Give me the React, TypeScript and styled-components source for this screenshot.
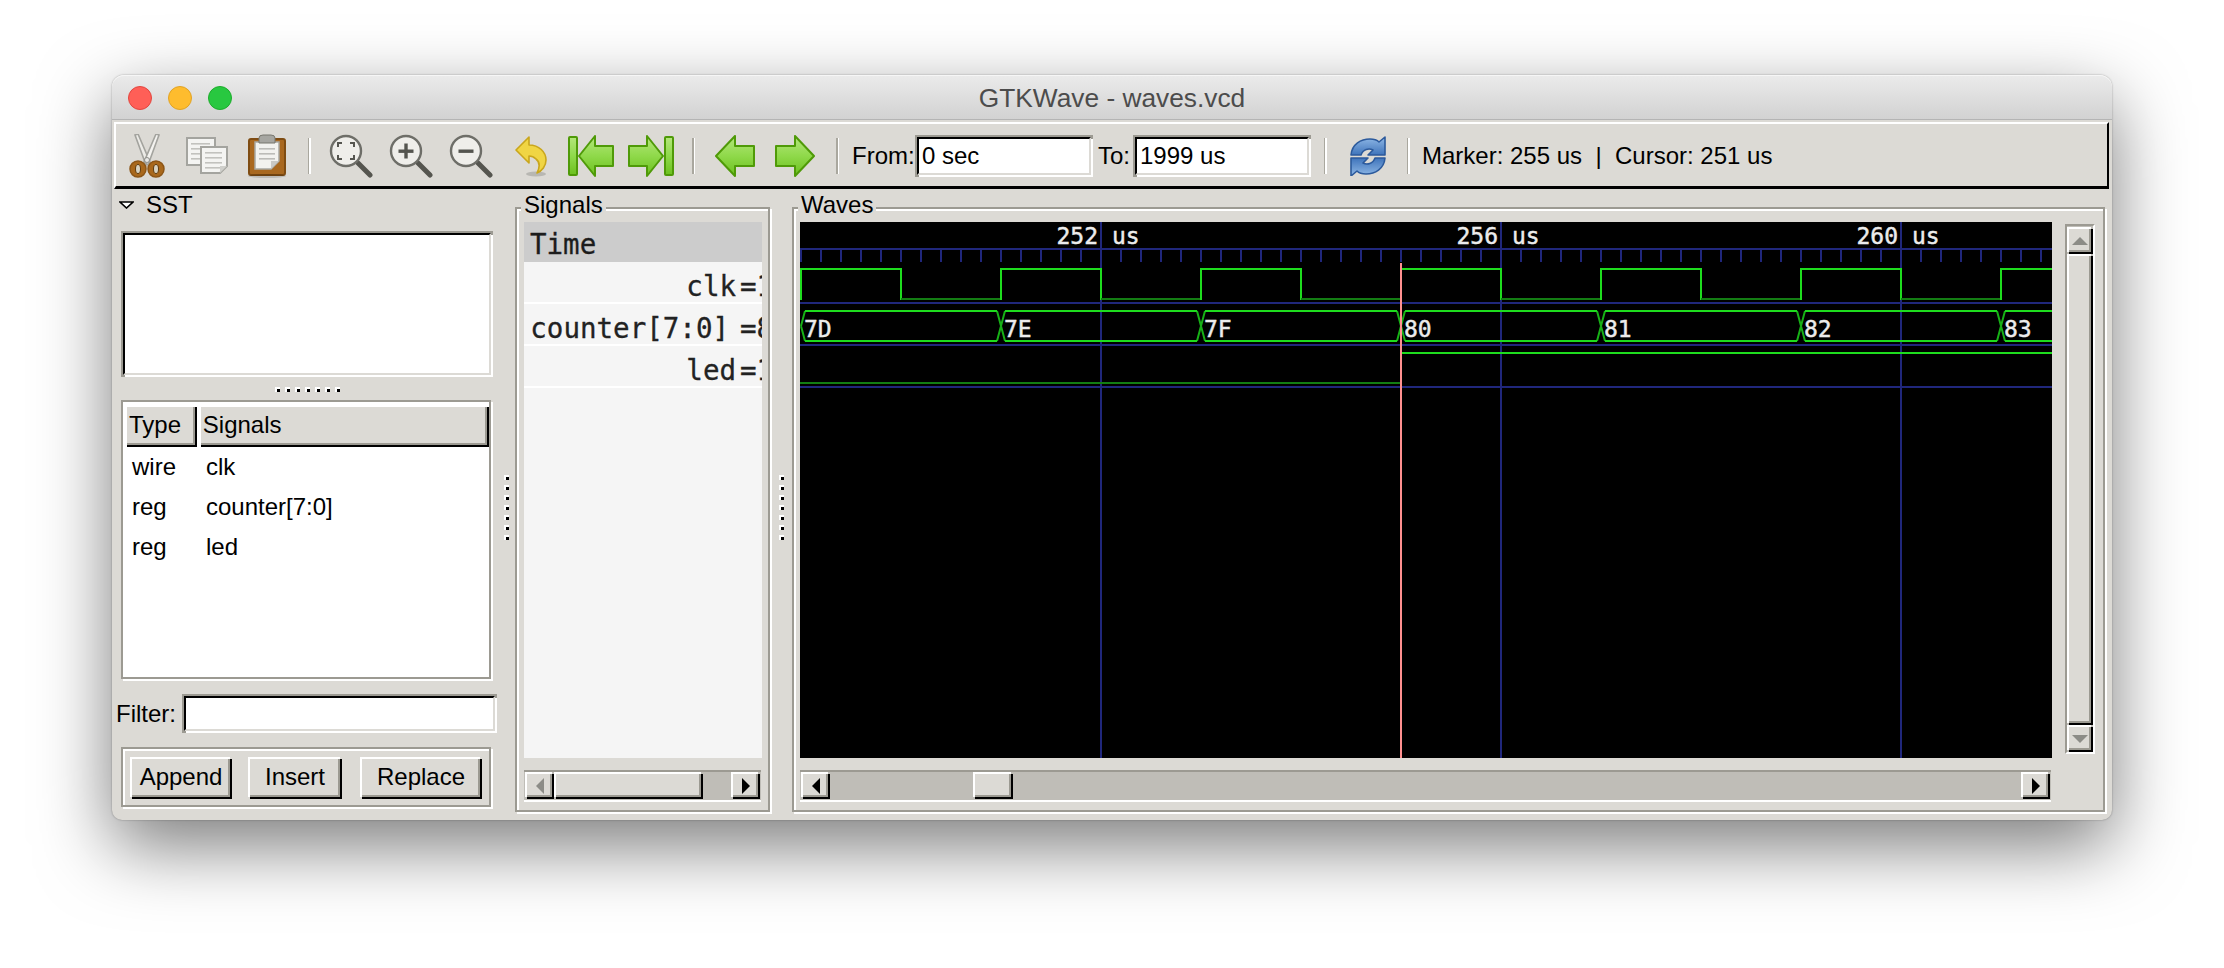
import styled, { createGlobalStyle, css } from "styled-components";

const GlobalStyle = createGlobalStyle`
  html, body {
    margin: 0;
    height: 100%;
    background: #fff;
    overflow: hidden;
  }
  * {
    box-sizing: border-box;
  }
`;

const BG = "#dcdad5";
const DARK = "#9c9a92";

const raised = css`
  border-top: 2px solid #fff;
  border-left: 2px solid #fff;
  box-shadow: inset -2px -2px 0 ${DARK}, 2px 2px 0 #000;
  background: ${BG};
`;

const sunken = css`
  border-style: solid;
  border-width: 2px;
  border-color: #000 ${BG} ${BG} #000;
  box-shadow: -2px -2px 0 ${DARK}, 2px 2px 0 #fff, 2px -2px 0 ${DARK}, -2px 2px 0 ${DARK};
  background: #fff;
`;

const etched = css`
  border: 2px solid ${DARK};
  box-shadow: inset 2px 2px 0 #fff, 2px 2px 0 #fff;
`;

const Page = styled.div`
  padding: 75px 0 0 112px;
  font-family: "Liberation Sans", Arial, sans-serif;
  font-size: 24px;
  color: #000;
`;

const Window = styled.div`
  width: 2000px;
  height: 745px;
  display: flex;
  flex-direction: column;
  background: ${BG};
  border-radius: 12px 12px 10px 10px;
  box-shadow: 0 26px 72px rgba(0, 0, 0, 0.52), 0 0 2px rgba(0, 0, 0, 0.35);
`;

const TitleBar = styled.div`
  position: relative;
  height: 45px;
  margin-bottom: 2px;
  flex: none;
  display: flex;
  align-items: center;
  justify-content: center;
  padding-top: 3px;
  background: linear-gradient(#ebebeb, #d2d2d2);
  border-bottom: 1px solid #b4b4b4;
  border-radius: 12px 12px 0 0;
  box-shadow: inset 0 1px 0 #f6f6f6;
  color: #4c4c4c;
  font-size: 26.3px;
`;

const Lights = styled.div`
  position: absolute;
  left: 16px;
  top: 11px;
  display: flex;
  gap: 16px;
`;

const Light = styled.span<{ $fill: string; $edge: string }>`
  width: 24px;
  height: 24px;
  border-radius: 50%;
  background: ${(p) => p.$fill};
  border: 1px solid ${(p) => p.$edge};
`;

const Toolbar = styled.div`
  flex: none;
  height: 67px;
  margin: 0 3px 0 2px;
  padding: 2px 0 0 1px;
  display: flex;
  align-items: center;
  border-top: 2px solid #fff;
  border-left: 2px solid #fff;
  border-right: 2px solid #000;
  border-bottom: 3px solid #000;
`;

const ToolSlot = styled.div<{ $w?: number }>`
  flex: none;
  width: ${(p) => p.$w ?? 60}px;
  height: 44px;
  display: flex;
  align-items: center;
  justify-content: center;
  svg {
    filter: blur(0.5px);
  }
`;

const Sep = styled.div<{ $w?: number }>`
  flex: none;
  width: ${(p) => p.$w ?? 24}px;
  height: 36px;
  display: flex;
  justify-content: center;
  &::before {
    content: "";
    width: 3px;
    height: 100%;
    background: linear-gradient(90deg, #a9a79e 0 50%, #fff 50% 100%);
  }
`;

const ToolLabel = styled.span<{ $w: number; $ml: number }>`
  flex: none;
  width: ${(p) => p.$w}px;
  margin-left: ${(p) => p.$ml}px;
  white-space: pre;
`;

const RangeInput = styled.input`
  flex: none;
  width: 174px;
  height: 38px;
  padding: 0 3px;
  font: inherit;
  color: #000;
  outline: none;
  border-radius: 0;
  ${sunken}
`;

const Body = styled.div`
  flex: 1;
  min-height: 0;
  display: flex;
`;

const LeftPane = styled.div`
  flex: none;
  width: 385px;
  padding-left: 5px;
  display: flex;
  flex-direction: column;
`;

const SstHeader = styled.div`
  height: 32px;
  padding: 0 0 0 2px;
  display: flex;
  align-items: center;
  gap: 12px;
`;

const SearchBox = styled.div`
  width: 368px;
  height: 142px;
  margin: 12px 0 0 6px;
  ${sunken}
`;

const HHandle = styled.div`
  height: 25px;
  width: 372px;
  margin-left: 4px;
  padding-top: 3px;
  display: flex;
  align-items: center;
  justify-content: center;
  gap: 5px;
`;

const GripDot = styled.i`
  display: block;
  width: 5px;
  height: 5px;
  background: #000;
  box-shadow: inset 2px 2px 0 #fff;
`;

const SignalTable = styled.div`
  width: 370px;
  height: 279px;
  margin-left: 4px;
  padding: 3px 2px 2px 2px;
  background: #fff;
  ${etched}
`;

const HeadRow = styled.div`
  display: flex;
  gap: 4px;
  height: 40px;
  margin-bottom: 2px;
`;

const HeadCell = styled.div<{ $w: number }>`
  width: ${(p) => p.$w}px;
  height: 40px;
  padding: 0 0 2px 2px;
  display: flex;
  align-items: center;
  ${raised}
`;

const TableRow = styled.div`
  height: 40px;
  display: flex;
  align-items: center;
`;

const TypeCell = styled.span`
  width: 74px;
  padding-left: 7px;
`;

const NameCell = styled.span`
  padding-left: 7px;
`;

const FilterRow = styled.div`
  margin-top: 17px;
  display: flex;
  align-items: center;
`;

const FilterLabel = styled.span`
  width: 67px;
  margin-left: -1px;
  margin-right: 1px;
`;

const FilterInput = styled.input`
  width: 311px;
  height: 35px;
  outline: none;
  border-radius: 0;
  ${sunken}
`;

const ButtonBox = styled.div`
  width: 370px;
  height: 60px;
  margin: 16px 0 0 4px;
  padding-left: 7px;
  display: flex;
  align-items: center;
  ${etched}
`;

const ActionButton = styled.button<{ $w: number; $ml: number }>`
  flex: none;
  width: ${(p) => p.$w}px;
  height: 40px;
  margin-left: ${(p) => p.$ml}px;
  padding: 0 0 2px;
  font: inherit;
  color: #000;
  border: 0;
  border-radius: 0;
  ${raised}
`;

const VHandle = styled.div<{ $w: number }>`
  flex: none;
  width: ${(p) => p.$w}px;
  padding-top: 6px;
  display: flex;
  flex-direction: column;
  align-items: center;
  justify-content: center;
  gap: 5px;
`;

const Frame = styled.div<{ $w: number; $pl: number; $pr: number }>`
  position: relative;
  flex: none;
  width: ${(p) => p.$w}px;
  height: 605px;
  margin-top: 18px;
  padding: 13px ${(p) => p.$pr}px 0 ${(p) => p.$pl}px;
  display: flex;
  flex-direction: column;
  ${etched}
`;

const FrameLabel = styled.span`
  position: absolute;
  left: 4px;
  top: -16px;
  padding: 0 3px;
  line-height: 24px;
  background: ${BG};
`;

const SignalList = styled.div`
  width: 238px;
  height: 536px;
  flex: none;
  overflow: hidden;
  background: #f5f5f5;
  color: #222;
  font-family: "DejaVu Sans Mono", monospace;
  font-size: 27.5px;
  -webkit-text-stroke: 0.3px #222;
`;

const TimeRow = styled.div`
  height: 40px;
  padding: 6px 0 0 6px;
  background: #cccccc;
  color: #1c1c1c;
`;

const SignalRow = styled.div`
  height: 42px;
  display: flex;
  align-items: center;
  padding-top: 7px;
  border-bottom: 2px solid #fff;
  white-space: pre;
`;

const SignalName = styled.span<{ $trail?: number }>`
  flex: none;
  width: 212px;
  padding-right: ${(p) => p.$trail ?? 0}px;
  text-align: right;
`;

const SignalValue = styled.span`
  flex: none;
  margin-left: 4px;
`;

const Trough = styled.div<{ $w: number }>`
  flex: none;
  width: ${(p) => p.$w}px;
  height: 32px;
  margin-top: 12px;
  padding: 0 3px 0 1px;
  display: flex;
  background: #bfbdb7;
  border-top: 2px solid ${DARK};
  border-bottom: 2px solid #fff;
`;

const ArrowButton = styled.div`
  flex: none;
  width: 27px;
  height: 25px;
  display: flex;
  align-items: center;
  justify-content: center;
  ${raised}
`;

const Thumb = styled.div<{ $w: number; $ml: number }>`
  flex: none;
  width: ${(p) => p.$w}px;
  height: 25px;
  margin-left: ${(p) => p.$ml}px;
  ${raised}
`;

const PushRight = styled.div`
  flex: 1;
`;

const WaveRow = styled.div`
  flex: none;
  display: flex;
  gap: 13px;
`;

const WaveCanvas = styled.svg`
  flex: none;
  display: block;
  background: #000;
`;

const VTrough = styled.div`
  flex: none;
  width: 30px;
  height: 530px;
  margin-top: 2px;
  padding: 1px 0 2px;
  display: flex;
  flex-direction: column;
  gap: 2px;
  background: #bfbdb7;
  border-left: 2px solid ${DARK};
  border-top: 2px solid ${DARK};
  border-right: 2px solid #fff;
  border-bottom: 2px solid #fff;
`;

const VButton = styled.div`
  flex: none;
  height: 25px;
  width: 24px;
  display: flex;
  align-items: center;
  justify-content: center;
  ${raised}
`;

const VThumb = styled.div`
  flex: 1;
  width: 24px;
  ${raised}
`;

function Grip({ n }: { n: number }) {
  return (
    <>
      {Array.from({ length: n }, (_, i) => (
        <GripDot key={i} />
      ))}
    </>
  );
}

function ScissorsIcon() {
  return (
    <svg width="36" height="44" viewBox="0 0 36 44">
      <path d="M6 1 L9 0 L21 28 L17 31 Z" fill="#ecebe7" stroke="#a3a39e" strokeWidth="1.6" />
      <path d="M30 1 L27 0 L15 28 L19 31 Z" fill="#f4f3f0" stroke="#a3a39e" strokeWidth="1.6" />
      <ellipse cx="9" cy="35" rx="8" ry="8" fill="#a9681c" stroke="#8c5516" strokeWidth="1.5" />
      <ellipse cx="27" cy="35" rx="8" ry="8" fill="#a9681c" stroke="#8c5516" strokeWidth="1.5" />
      <ellipse cx="9" cy="35" rx="2.5" ry="4.5" fill="#d9d3c2" stroke="#5e3a0e" />
      <ellipse cx="27" cy="35" rx="2.5" ry="4.5" fill="#d9d3c2" stroke="#5e3a0e" />
      <circle cx="18" cy="26" r="2.5" fill="#e8e8e6" stroke="#8d8d88" />
    </svg>
  );
}

function Sheet({ x, y, w, h }: { x: number; y: number; w: number; h: number }) {
  return (
    <g transform={`translate(${x} ${y})`}>
      <path
        d={`M1 1 H${w - 1} V${h - 8} L${w - 8} ${h - 1} H1 Z`}
        fill="#f4f4f2"
        stroke="#a4a49f"
        strokeWidth="2"
      />
      {[6, 11, 16, 21].map((ly) => (
        <rect key={ly} x="5" y={ly} width={w - 11} height="1.6" fill="#c2c2be" />
      ))}
      <path d={`M${w - 1} ${h - 8} L${w - 8} ${h - 8} L${w - 8} ${h - 1} Z`} fill="#cfcfcb" />
    </g>
  );
}

function CopyIcon() {
  return (
    <svg width="42" height="38" viewBox="0 0 42 38">
      <Sheet x={0} y={0} w={30} h={29} />
      <Sheet x={14} y={9} w={28} h={28} />
    </svg>
  );
}

function ClipboardIcon() {
  return (
    <svg width="38" height="44" viewBox="0 0 38 44">
      <rect x="1" y="5" width="36" height="36" rx="2" fill="#a9681f" stroke="#7f4c12" strokeWidth="2" />
      <ellipse cx="19" cy="42" rx="19" ry="2" fill="#000" opacity="0.14" />
      <path d="M7 8 H31 V27 L23 35 H7 Z" fill="#f2f2ef" stroke="#a8a8a2" strokeWidth="1.5" />
      <path d="M31 27 L23 27 V35 Z" fill="#c9c9c5" />
      {[14, 19, 24].map((ly) => (
        <rect key={ly} x="11" y={ly} width="16" height="1.6" fill="#bcbcb8" />
      ))}
      <path d="M11 9 V4 Q11 1 15 1 H23 Q27 1 27 4 V9 Z" fill="#a6a6a1" stroke="#77776f" />
    </svg>
  );
}

function MagnifierIcon({ mark }: { mark: "fit" | "in" | "out" }) {
  return (
    <svg width="44" height="44" viewBox="0 0 44 44">
      <line x1="29" y1="29" x2="41" y2="41" stroke="#55554f" strokeWidth="5" strokeLinecap="round" />
      <circle cx="17" cy="17" r="15" fill="#efeeea" stroke="#6e6e68" strokeWidth="2.4" />
      {mark === "fit" && (
        <path
          d="M9 13 V9 H13 M21 9 H25 V13 M25 21 V25 H21 M13 25 H9 V21"
          fill="none"
          stroke="#55554f"
          strokeWidth="2"
        />
      )}
      {mark !== "fit" && <rect x="9.5" y="15.5" width="15" height="3.4" fill="#55554f" />}
      {mark === "in" && <rect x="15.3" y="9.5" width="3.4" height="15" fill="#55554f" />}
    </svg>
  );
}

function UndoIcon() {
  return (
    <svg width="32" height="42" viewBox="0 0 32 42">
      <ellipse cx="21" cy="39" rx="10" ry="2.5" fill="#000" opacity="0.16" />
      <path
        d="M1 15 L14 2 V10 C24 10 31 17 31 25 C31 31 27 36 22 38 C25 32 25 27 21 24 C19 22 16 21 14 21 V28 Z"
        fill="#f0d544"
        stroke="#c9a61c"
        strokeWidth="1.6"
        strokeLinejoin="round"
      />
    </svg>
  );
}

const arrowStyle = {
  fill: "url(#greenFill)",
  stroke: "#4f9a08",
  strokeWidth: 2,
  strokeLinejoin: "round" as const,
};

function JumpLeftIcon() {
  return (
    <svg width="46" height="42" viewBox="0 0 46 42">
      <rect x="1" y="2" width="8" height="38" rx="1" {...arrowStyle} />
      <path d="M11 21 L27 1 V11 H45 V31 H27 V41 Z" {...arrowStyle} />
    </svg>
  );
}

function JumpRightIcon() {
  return (
    <svg width="46" height="42" viewBox="0 0 46 42">
      <rect x="37" y="2" width="8" height="38" rx="1" {...arrowStyle} />
      <path d="M35 21 L19 1 V11 H1 V31 H19 V41 Z" {...arrowStyle} />
    </svg>
  );
}

function StepLeftIcon() {
  return (
    <svg width="40" height="42" viewBox="0 0 40 42">
      <path d="M1 21 L20 1 V11 H39 V31 H20 V41 Z" {...arrowStyle} />
    </svg>
  );
}

function StepRightIcon() {
  return (
    <svg width="40" height="42" viewBox="0 0 40 42">
      <path d="M39 21 L20 1 V11 H1 V31 H20 V41 Z" {...arrowStyle} />
    </svg>
  );
}

function RefreshIcon() {
  const half = "M2 19 C3 8 12 3 21 3 C25 3 28 4 30 6 L36 1 V19 H19 L24 14 C20 12 14 13 12 19 Z";
  return (
    <svg width="38" height="40" viewBox="0 0 38 40">
      <path d={half} fill="url(#blueFill)" stroke="#2c5a9c" strokeWidth="1.6" strokeLinejoin="round" />
      <path
        d={half}
        transform="rotate(180 19 20.5)"
        fill="url(#blueFill)"
        stroke="#2c5a9c"
        strokeWidth="1.6"
        strokeLinejoin="round"
      />
    </svg>
  );
}

function ArrowH({ dir, color }: { dir: "l" | "r"; color: string }) {
  return (
    <svg width="10" height="16" viewBox="0 0 10 16">
      <polygon points={dir === "l" ? "9,0 9,16 1,8" : "1,0 1,16 9,8"} fill={color} />
    </svg>
  );
}

function ArrowV({ dir }: { dir: "u" | "d" }) {
  return (
    <svg width="16" height="10" viewBox="0 0 16 10">
      <polygon points={dir === "u" ? "0,9 16,9 8,1" : "0,1 16,1 8,9"} fill="#8c8c87" />
    </svg>
  );
}

const NAVY = "#20277c";
const GREEN = "#1edc1e";
const GREEN_LOW = "#137d13";
const GREEN_MID = "#17b017";

const ticks = Array.from({ length: 63 }, (_, i) => 801 + i * 20);
const clkEdges = Array.from({ length: 13 }, (_, i) => 801 + i * 100);
const counterValues = ["7D", "7E", "7F", "80", "81", "82", "83"];
const timeLabels = [
  { x: 1101, label: "252" },
  { x: 1501, label: "256" },
  { x: 1901, label: "260" },
];

const WaveText = styled.text`
  font-family: "DejaVu Sans Mono", monospace;
  font-size: 23px;
  fill: #ececec;
  stroke: #ececec;
  stroke-width: 0.45px;
`;

function Waves() {
  return (
    <WaveCanvas width="1252" height="536" viewBox="800 222 1252 536">
      <line x1="800" x2="2052" y1="249" y2="249" stroke={NAVY} strokeWidth="2" />
      {ticks.map((x) => (
        <line key={x} x1={x} x2={x} y1="249" y2="262" stroke={NAVY} strokeWidth="2" />
      ))}
      {[303, 345, 387].map((y) => (
        <line key={y} x1="800" x2="2052" y1={y} y2={y} stroke={NAVY} strokeWidth="2" />
      ))}
      {timeLabels.map((t) => (
        <line key={t.x} x1={t.x} x2={t.x} y1="222" y2="758" stroke={NAVY} strokeWidth="2" />
      ))}
      {timeLabels.map((t) => (
        <g key={t.label}>
          <WaveText x={t.x - 3} y="244" textAnchor="end">
            {t.label}
          </WaveText>
          <WaveText x={t.x + 11} y="244">
            us
          </WaveText>
        </g>
      ))}

      {clkEdges.map((x, i) =>
        i % 2 === 0 ? (
          <g key={x}>
            <line x1={x} x2={x} y1="268" y2="300" stroke={GREEN} strokeWidth="2" />
            <line x1={x} x2={x + 100} y1="269" y2="269" stroke={GREEN} strokeWidth="2" />
          </g>
        ) : (
          <g key={x}>
            <line x1={x} x2={x} y1="268" y2="300" stroke={GREEN} strokeWidth="2" />
            <line x1={x} x2={x + 100} y1="299" y2="299" stroke={GREEN_LOW} strokeWidth="2" />
          </g>
        ),
      )}

      {counterValues.map((v, i) => {
        const x = 801 + i * 200;
        return (
          <g key={v}>
            <path
              d={`M${x} 326 L${x + 4} 311 M${x} 326 L${x + 4} 341 M${x + 200} 326 L${x + 196} 311 M${x + 200} 326 L${x + 196} 341`}
              stroke={GREEN_MID}
              strokeWidth="2"
              fill="none"
            />
            <path
              d={`M${x + 4} 311 H${x + 196} M${x + 4} 341 H${x + 196}`}
              stroke={GREEN}
              strokeWidth="2"
              fill="none"
            />
            <WaveText x={x + 3} y="337">
              {v}
            </WaveText>
          </g>
        );
      })}

      <line x1="800" x2="1401" y1="383" y2="383" stroke={GREEN_LOW} strokeWidth="2" />
      <line x1="1401" x2="2052" y1="353" y2="353" stroke={GREEN} strokeWidth="2" />

      <line x1="1401" x2="1401" y1="263" y2="758" stroke="#ff9090" strokeWidth="2" />
    </WaveCanvas>
  );
}

export default function App() {
  return (
    <Page>
      <GlobalStyle />
      <svg width="0" height="0" style={{ position: "absolute" }}>
        <defs>
          <linearGradient id="greenFill" x1="0" y1="0" x2="0" y2="1">
            <stop offset="0" stopColor="#b4e67c" />
            <stop offset="0.5" stopColor="#8fd94a" />
            <stop offset="1" stopColor="#6cc01e" />
          </linearGradient>
          <linearGradient id="blueFill" x1="0" y1="0" x2="0" y2="1">
            <stop offset="0" stopColor="#8fb8e6" />
            <stop offset="1" stopColor="#3f74bb" />
          </linearGradient>
        </defs>
      </svg>
      <Window>
        <TitleBar>
          <Lights>
            <Light $fill="#ff5f57" $edge="#e2463f" />
            <Light $fill="#febc2e" $edge="#e1a325" />
            <Light $fill="#28c840" $edge="#1dad2b" />
          </Lights>
          GTKWave - waves.vcd
        </TitleBar>

        <Toolbar>
          <ToolSlot><ScissorsIcon /></ToolSlot>
          <ToolSlot><CopyIcon /></ToolSlot>
          <ToolSlot><ClipboardIcon /></ToolSlot>
          <Sep />
          <ToolSlot><MagnifierIcon mark="fit" /></ToolSlot>
          <ToolSlot><MagnifierIcon mark="in" /></ToolSlot>
          <ToolSlot><MagnifierIcon mark="out" /></ToolSlot>
          <ToolSlot><UndoIcon /></ToolSlot>
          <ToolSlot><JumpLeftIcon /></ToolSlot>
          <ToolSlot><JumpRightIcon /></ToolSlot>
          <Sep />
          <ToolSlot><StepLeftIcon /></ToolSlot>
          <ToolSlot><StepRightIcon /></ToolSlot>
          <Sep />
          <ToolLabel $w={65} $ml={3}>From:</ToolLabel>
          <RangeInput readOnly value="0 sec" />
          <ToolLabel $w={37} $ml={7}>To:</ToolLabel>
          <RangeInput readOnly value="1999 us" />
          <Sep $w={32} />
          <ToolSlot $w={54}><RefreshIcon /></ToolSlot>
          <Sep $w={27} />
          <ToolLabel $w={400} $ml={0}>Marker: 255 us  |  Cursor: 251 us</ToolLabel>
        </Toolbar>

        <Body>
          <LeftPane>
            <SstHeader>
              <svg width="15" height="8" viewBox="0 0 15 8">
                <polygon points="1,1 14,1 7.5,7" fill="#fff" stroke="#000" strokeWidth="1.6" />
              </svg>
              SST
            </SstHeader>
            <SearchBox />
            <HHandle>
              <Grip n={7} />
            </HHandle>
            <SignalTable>
              <HeadRow>
                <HeadCell $w={70}>Type</HeadCell>
                <HeadCell $w={289}>Signals</HeadCell>
              </HeadRow>
              <TableRow><TypeCell>wire</TypeCell><NameCell>clk</NameCell></TableRow>
              <TableRow><TypeCell>reg</TypeCell><NameCell>counter[7:0]</NameCell></TableRow>
              <TableRow><TypeCell>reg</TypeCell><NameCell>led</NameCell></TableRow>
            </SignalTable>
            <FilterRow>
              <FilterLabel>Filter:</FilterLabel>
              <FilterInput readOnly />
            </FilterRow>
            <ButtonBox>
              <ActionButton $w={100} $ml={0}>Append</ActionButton>
              <ActionButton $w={92} $ml={18}>Insert</ActionButton>
              <ActionButton $w={120} $ml={20}>Replace</ActionButton>
            </ButtonBox>
          </LeftPane>

          <VHandle $w={18}>
            <Grip n={7} />
          </VHandle>

          <Frame $w={255} $pl={7} $pr={6}>
            <FrameLabel>Signals</FrameLabel>
            <SignalList>
              <TimeRow>Time</TimeRow>
              <SignalRow>
                <SignalName>clk</SignalName>
                <SignalValue>=1</SignalValue>
              </SignalRow>
              <SignalRow>
                <SignalName $trail={7}>counter[7:0]</SignalName>
                <SignalValue>=80</SignalValue>
              </SignalRow>
              <SignalRow>
                <SignalName>led</SignalName>
                <SignalValue>=1</SignalValue>
              </SignalRow>
            </SignalList>
            <Trough $w={237}>
              <ArrowButton><ArrowH dir="l" color="#8c8c87" /></ArrowButton>
              <Thumb $w={147} $ml={2} />
              <PushRight />
              <ArrowButton><ArrowH dir="r" color="#000" /></ArrowButton>
            </Trough>
          </Frame>

          <VHandle $w={22}>
            <Grip n={7} />
          </VHandle>

          <Frame $w={1313} $pl={6} $pr={7}>
            <FrameLabel>Waves</FrameLabel>
            <WaveRow>
              <Waves />
              <VTrough>
                <VButton><ArrowV dir="u" /></VButton>
                <VThumb />
                <VButton><ArrowV dir="d" /></VButton>
              </VTrough>
            </WaveRow>
            <Trough $w={1251}>
              <ArrowButton><ArrowH dir="l" color="#000" /></ArrowButton>
              <Thumb $w={38} $ml={145} />
              <PushRight />
              <ArrowButton><ArrowH dir="r" color="#000" /></ArrowButton>
            </Trough>
          </Frame>
        </Body>
      </Window>
    </Page>
  );
}
